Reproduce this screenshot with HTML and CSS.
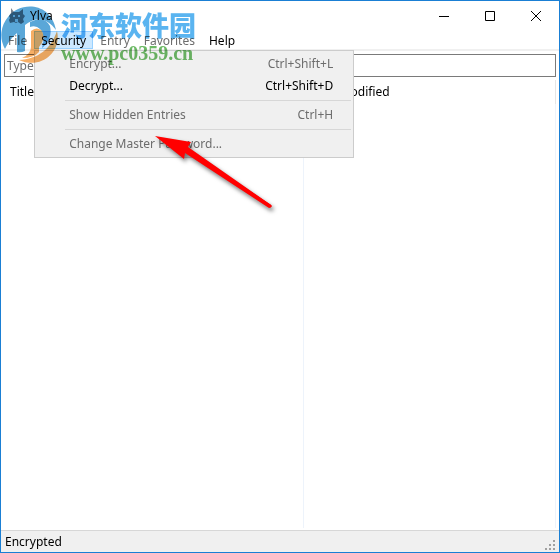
FILE: index.html
```html
<!DOCTYPE html>
<html lang="en">
<head>
<meta charset="utf-8">
<title>Ylva</title>
<link rel="stylesheet" href="styles.css">
</head>
<body>
<div class="window">
  <header class="titlebar">
    <svg class="app-icon" viewBox="0 0 16 16" aria-hidden="true">
      <path d="M2 0l3 4h5l4-3v5l2 2-2 3 1 3-3 2-3-2-2 1-2-1-4 1-1-3 1-2-1-2 2-3z" fill="#7a848e"/>
      <path d="M4 7h2v2H4zM9 7h2v2H9zM6 11h3v3H6z" fill="#e5edf3"/>
    </svg>
    <h1 class="title">Ylva</h1>
    <div class="controls">
      <button class="control" aria-label="Minimize"><svg viewBox="0 0 10 10"><path d="M0 5.500h10"/></svg></button>
      <button class="control" aria-label="Maximize"><svg viewBox="0 0 10 10"><path d="M.5.5h9v9h-9z"/></svg></button>
      <button class="control" aria-label="Close"><svg viewBox="0 0 10 10"><path d="M0 0l10 10M10 0L0 10"/></svg></button>
    </div>
  </header>
  <nav class="menubar">
    <button class="menu-button muted">File</button>
    <div class="menu-holder">
      <button class="menu-button open">Security</button>
      <div class="menu">
        <button class="item" disabled><span>Encrypt...</span><span>Ctrl+Shift+L</span></button>
        <button class="item"><span>Decrypt...</span><span>Ctrl+Shift+D</span></button>
        <hr class="rule">
        <button class="item" disabled><span>Show Hidden Entries</span><span>Ctrl+H</span></button>
        <hr class="rule">
        <button class="item" disabled><span>Change Master Password...</span></button>
      </div>
    </div>
    <button class="menu-button muted">Entry</button>
    <button class="menu-button muted">Favorites</button>
    <button class="menu-button">Help</button>
  </nav>
  <main class="content">
    <input class="search" type="text" placeholder="Type" aria-label="Search entries">
    <table class="entries">
      <thead><tr><th>Title</th><th>Date Modified</th></tr></thead>
      <tbody><tr><td></td><td></td></tr></tbody>
    </table>
  </main>
  <footer class="status">
    <span>Encrypted</span>
    <svg class="grip" viewBox="0 0 10 10" aria-hidden="true"><path d="M8 0h2v2H8zM4 4h2v2H4zM8 4h2v2H8zM0 8h2v2H0zM4 8h2v2H4zM8 8h2v2H8z"/></svg>
  </footer>
</div>
<div class="watermark">
  <svg class="mark" viewBox="0 0 58 58" aria-hidden="true">
    <path d="M4 43A28 28 0 0 1 7 11C19 -5 50 -4 55 24C47 12 34 10 24 19V45Q20 47 16 46V27Q8 34 4 43Z" fill="#5aa7d8"/>
    <path d="M29 16Q43 9 49 20Q52 33 41 42Q45 29 39 23Q35 19 29 21Z" fill="#5aa7d8"/>
    <path d="M56 25C61 46 40 64 18 54C37 53 50 43 56 25Z" fill="#f6ae65"/>
    <path d="M30 25Q36 20 41 25Q45 33 38 41V46Q33 52 21 52Q30 48 30 41Z" fill="#f6ae65"/>
  </svg>
  <div class="mark-text"><span class="mark-name" lang="zh">河东软件园</span><span class="mark-site">www.pc0359.cn</span></div>
</div>
<svg class="arrow" viewBox="0 0 130 90" aria-hidden="true">
  <path d="M5 6L41 12 38 17 121 75Q123 77 119 78L35 23 34 29Z" fill="#f00"/>
  <path d="M34 19L120 76" stroke="#f00" stroke-width="3" stroke-linecap="round"/>
</svg>
</body>
</html>
```

FILE: styles.css
```css
* { box-sizing: border-box; }
body { margin: 0; font: 12px/16px "Noto Sans", sans-serif; color: #000; background: #fff; }
button, input { font: inherit; color: inherit; border: 0; padding: 0; background: none; }
.window { min-height: 100vh; display: flex; flex-direction: column; border: 1px solid #1a7fd4; }
.titlebar { display: flex; align-items: center; height: 30px; padding-left: 8px; }
.app-icon { width: 16px; height: 16px; }
.title { margin: 0 0 0 5px; font-size: 12px; font-weight: 400; }
.controls { display: flex; margin-left: auto; }
.control { width: 46px; height: 28px; display: flex; align-items: center; justify-content: center; }
.control svg { width: 10px; height: 10px; fill: none; stroke: #000; overflow: visible; }
.menubar { display: flex; height: 20px; border-bottom: 2px solid #f0f0f0; }
.menu-button { height: 18px; padding: 1px 7px 0; }
.muted { color: #6d6d6d; }
.menu-holder { position: relative; }
.open { background: #cce8ff; box-shadow: inset 0 0 0 1px #99d1ff; }
.menu { position: absolute; z-index: 1; top: 19px; left: 0; width: 320px; padding: 2px; background: #f0f0f0; border: 1px solid #ccc; }
.item { display: flex; justify-content: space-between; align-items: center; width: 100%; height: 22px; padding: 0 18px 0 32px; }
.item:disabled { color: #6d6d6d; }
.rule { margin: 3px 0 3px 28px; border: 0; border-top: 1px solid #d7d7d7; }
.content { flex: 1; display: flex; flex-direction: column; padding: 3px 3px 2px; }
.search { width: 100%; height: 23px; padding: 0 2px; border: 1px solid #7a7a7a; }
.search::placeholder { color: #6d6d6d; opacity: 1; }
.entries { flex: 1; display: flex; flex-direction: column; margin-top: 3px; }
.entries thead, .entries tbody { display: flex; }
.entries tbody { flex: 1; }
.entries tr { flex: 1; display: grid; grid-template-columns: 300fr 252fr; }
.entries th { height: 24px; padding: 4px 6px; text-align: left; font-weight: 400; border-right: 1px solid #e5e5e5; }
.entries td { border-right: 1px solid #edf3fb; }
.status { display: flex; justify-content: space-between; height: 22px; padding: 3px 4px 2px; background: #f0f0f0; border-top: 1px solid #d7d7d7; }
.grip { width: 10px; height: 10px; align-self: flex-end; fill: #a0a0a0; }
.watermark { position: absolute; z-index: 2; top: 6px; left: 1px; display: flex; gap: 2px; mix-blend-mode: multiply; pointer-events: none; }
.mark { width: 58px; height: 58px; }
.mark-text { display: flex; flex-direction: column; }
.mark-name { font: 900 27px/38px "Noto Sans CJK SC", sans-serif; color: #5ab4f0; }
.mark-site { font: 700 20px/18px "Liberation Serif", serif; color: #6dba66; }
.arrow { position: absolute; z-index: 3; top: 130px; left: 150px; width: 130px; height: 90px; filter: drop-shadow(2px 3px 2px #0008); pointer-events: none; }
```
